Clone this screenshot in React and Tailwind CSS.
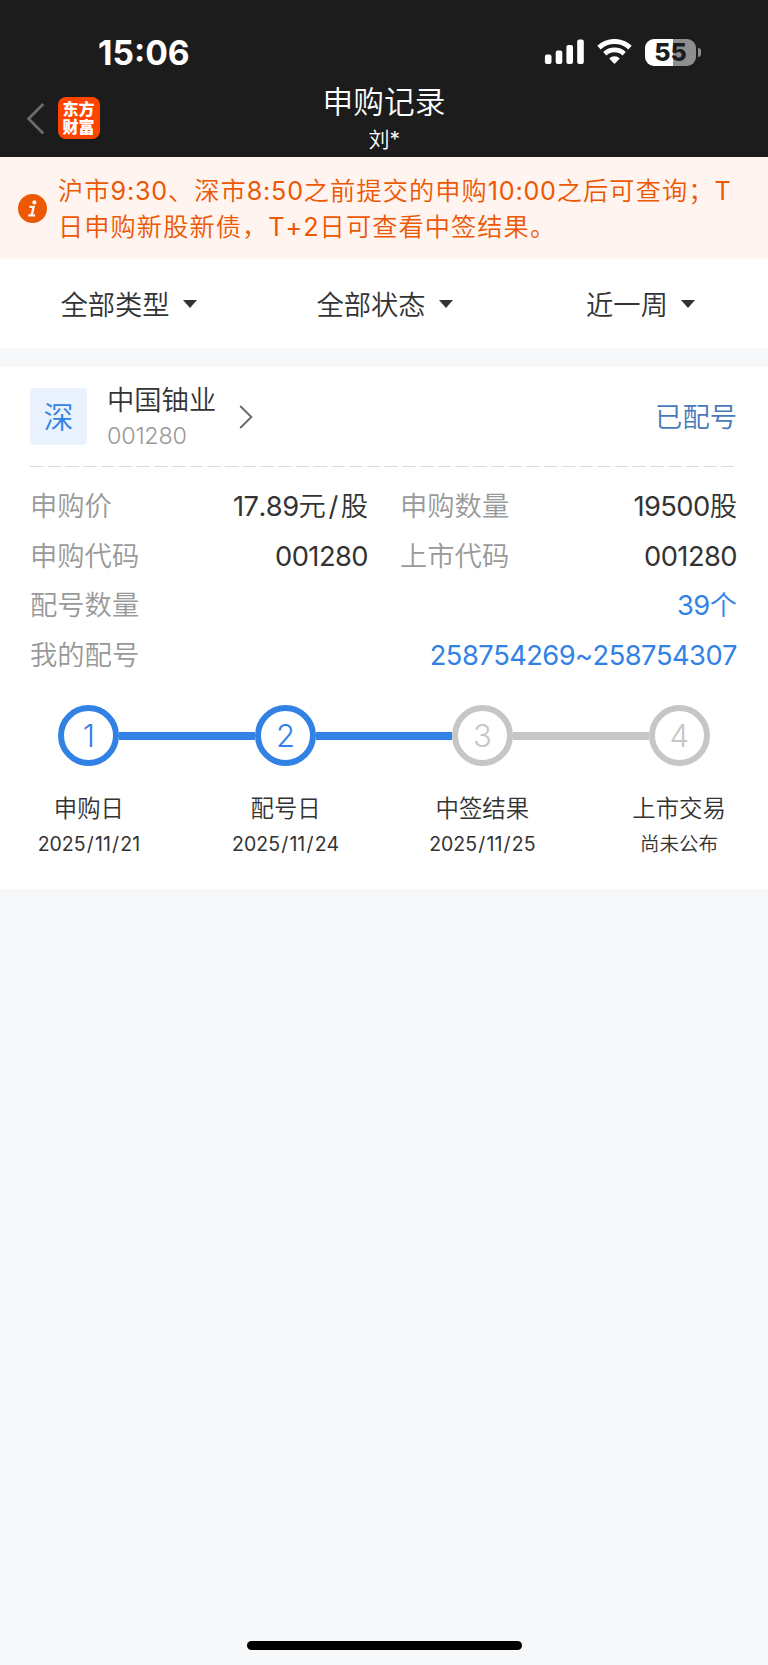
import React from "react";

const CJK = "font-['Noto_Sans_CJK_SC',sans-serif]";

// Renders mixed text, giving Latin runs and digits their own face and tracking.
function Mixed({ children, latin = "tracking-[-0.55px]", slash = "" }) {
  return String(children)
    .split(/(\/|[\x20-\x2e\x30-\x7e]+)/)
    .filter(Boolean)
    .map((part, i) =>
      /^[\x20-\x7e]+$/.test(part) ? (
        <span
          key={i}
          className={`font-['Inter',sans-serif] leading-none font-normal [font-kerning:none] ${latin} ${part === "/" ? slash : ""}`}
        >
          {part}
        </span>
      ) : (
        <span key={i}>{part}</span>
      )
    );
}

function StatusBar() {
  return (
    <div className="flex h-[85px] items-start justify-between pt-[32px] pr-[67px] pl-[98px]">
      <div className="mt-[1px] font-['Inter',sans-serif] text-[33.6px] leading-[40px] font-bold text-white">15:06</div>
      <div className="flex h-[40px] items-center gap-[13px]">
        <svg width="40" height="26" viewBox="0 0 40 26" fill="#fff">
          <rect x="0.9" y="15.5" width="6.6" height="9.5" rx="2" />
          <rect x="11.7" y="11.5" width="6.6" height="13.5" rx="2" />
          <rect x="22.4" y="6" width="6.6" height="19" rx="2" />
          <rect x="33.2" y="0.5" width="6.6" height="24.5" rx="2" />
        </svg>
        <svg width="35" height="26" viewBox="0 0 35 26" fill="none" stroke="#fff">
          <path d="M2 8.6a22.6 22.6 0 0 1 31 0" strokeWidth="5" />
          <path d="M7.8 14.7a14.2 14.2 0 0 1 19.4 0" strokeWidth="4.8" />
          <path d="M12.2 19.4a7.6 7.6 0 0 1 10.6 0L17.5 25z" fill="#fff" stroke="none" />
        </svg>
        <div className="flex items-center gap-[1.5px]">
          <div className="flex h-[27px] w-[51px] items-center justify-center rounded-[9px] bg-[linear-gradient(to_right,#fff_55%,#8e8e8e_55%)] font-['Inter',sans-serif] text-[25px] leading-[27px] font-extrabold tracking-[-0.1px] text-[#1c1c1c]">
            55
          </div>
          <div className="h-[9px] w-[3.5px] rounded-r-full bg-[#8e8e8e]" />
        </div>
      </div>
    </div>
  );
}

function NavBar() {
  return (
    <div className="grid h-[72px] grid-cols-[256px_256px_256px]">
      <div className="flex items-start pt-[12px] pl-[26px]">
        <svg width="19" height="42" viewBox="0 0 19 42" fill="none" stroke="#6b6b6b" strokeWidth="2.8">
          <path d="M17.3 7L2.6 21.8L17.3 36.4" />
        </svg>
        <div className="ml-[13px] flex h-[42px] w-[42px] items-start justify-center rounded-[8px] bg-[#ff4400] pt-[2px] text-white">
          <p className="w-[33px] text-[16px] leading-[18px] font-black break-all">东方财富</p>
        </div>
      </div>
      <div className="flex flex-col items-center text-white">
        <div className="mt-[-2px] text-[30.7px] leading-[34px] font-[350]">申购记录</div>
        <div className="mt-[8px] text-[21px] leading-[26px] font-[350]">
          <Mixed>刘*</Mixed>
        </div>
      </div>
    </div>
  );
}

function Notice() {
  return (
    <div className="flex h-[102px] items-start bg-[#fff4ef] pt-[15px] pl-[18px]">
      <svg className="mt-[22px]" width="29" height="29" viewBox="0 0 29 29">
        <circle cx="14.5" cy="14.5" r="14.5" fill="#ec5803" />
        <g fill="none" stroke="#fff4ef" strokeWidth="2.4">
          <path d="M11.4 12.9h4.2l-1.9 8.3M10.3 21.4h6.8" />
        </g>
        <circle cx="16.4" cy="8.4" r="2.1" fill="#fff4ef" />
      </svg>
      <div className="ml-[11px] text-[25.2px] leading-[35.7px] font-[350] tracking-[1.1px] whitespace-nowrap text-[#ec5803]">
        <div><Mixed latin="tracking-[0.75px]">沪市9:30、深市8:50之前提交的申购10:00之后可查询；T</Mixed></div>
        <div><Mixed latin="tracking-[1px]">日申购新股新债，T+2日可查看中签结果。</Mixed></div>
      </div>
    </div>
  );
}

function Filters() {
  return (
    <div className="grid h-[89px] grid-cols-3 bg-white text-[27.3px] leading-[88px] font-[350] text-[#333]">
      {["全部类型", "全部状态", "近一周"].map((t) => (
        <div key={t} className="flex items-start justify-center gap-[13px] pl-[1px]">
          <span>{t}</span>
          <svg className="mt-[41px]" width="14" height="8" viewBox="0 0 14 8" fill="#333">
            <path d="M0 0h14L7 8z" />
          </svg>
        </div>
      ))}
    </div>
  );
}

function Field({ label, value, blue }) {
  return (
    <div className="flex items-center justify-between">
      <span className="text-[#999]">{label}</span>
      <span className={blue ? "text-[#3282e6]" : "text-[#333]"}>
        <Mixed slash="px-[2.8px]">{value}</Mixed>
      </span>
    </div>
  );
}

const steps = [
  { n: 1, name: "申购日", date: "2025/11/21", done: true },
  { n: 2, name: "配号日", date: "2025/11/24", done: true },
  { n: 3, name: "中签结果", date: "2025/11/25", done: false },
  { n: 4, name: "上市交易", date: "尚未公布", done: false },
];

function Steps() {
  return (
    <div className="mt-[26px] -mr-[40.5px] -ml-[39.5px] grid grid-cols-4">
      {steps.map((s, i) => (
        <div key={s.n} className="flex flex-col items-center">
          <div className="flex w-full items-center">
            <div className={`mt-[2px] h-[8px] flex-1 ${i === 0 ? "bg-transparent" : i < 3 ? "bg-[#3282e6]" : "bg-[#c6c6c6]"}`} />
            <div
              className={`flex h-[61px] w-[61px] items-center justify-center rounded-full border-[6px] font-['Inter',sans-serif] text-[31px] leading-none font-light ${
                s.done ? "border-[#3282e6] text-[#3282e6]" : "border-[#c6c6c6] text-[#c6c6c6]"
              }`}
            >
              {s.n}
            </div>
            <div className={`mt-[2px] h-[8px] flex-1 ${i === 3 ? "bg-transparent" : i < 2 ? "bg-[#3282e6]" : "bg-[#c6c6c6]"}`} />
          </div>
          <div className="mt-[23px] text-[23.4px] leading-[36px] text-[#333]">{s.name}</div>
          <div className="text-[19.5px] leading-[35px] text-[#333]">
            <Mixed latin="tracking-[0px]" slash="px-[1.2px]">{s.date}</Mixed>
          </div>
        </div>
      ))}
    </div>
  );
}

function RecordCard() {
  return (
    <div className="mt-[19px] h-[522px] bg-white pt-[21px] pr-[31px] pl-[30px] font-[350]">
      <div className="flex h-[57px] items-center">
        <div className="flex h-[57px] w-[57px] items-center justify-center rounded-[4px] bg-[#e9f2fd] text-[30px] leading-[57px] text-[#3282e6]">
          <span className="-mt-[3px]">深</span>
        </div>
        <div className="ml-[20px]">
          <div className="mt-[1px] text-[27.3px] leading-[36px] text-[#333]">中国铀业</div>
          <div className="mt-[1px] font-['Inter',sans-serif] text-[23.4px] leading-[37px] font-light tracking-[-0.25px] text-[#999]">001280</div>
        </div>
        <svg className="ml-[23px]" width="14" height="24" viewBox="0 0 14 24" fill="none" stroke="#666" strokeWidth="1.8">
          <path d="M1.2 1L12.4 12L1.2 23" />
        </svg>
        <div className="-mt-[2px] ml-auto text-[27.3px] text-[#4a78b9]">已配号</div>
      </div>
      <svg className="mt-[21px] block" width="707" height="1" viewBox="0 0 707 1">
        <path d="M0 .5H704" stroke="#dcdcdc" strokeDasharray="13.7 4.02" />
      </svg>
      <div className="mt-[13px] text-[27.3px] leading-[49.7px]">
        <div className="grid grid-cols-[338px_337px] gap-x-[32px]">
          <Field label="申购价" value="17.89元/股" />
          <Field label="申购数量" value="19500股" />
          <Field label="申购代码" value="001280" />
          <Field label="上市代码" value="001280" />
        </div>
        <Field label="配号数量" value="39个" blue />
        <Field label="我的配号" value="258754269~258754307" blue />
      </div>
      <Steps />
    </div>
  );
}

export default function App() {
  return (
    <div className={`flex h-[1665px] w-[768px] flex-col overflow-hidden bg-[#f7f8fa] ${CJK}`}>
      <header className="h-[157px] bg-[#1c1c1c]">
        <StatusBar />
        <NavBar />
      </header>
      <Notice />
      <Filters />
      <RecordCard />
      <div className="mx-auto mt-auto mb-[15px] h-[9px] w-[275px] rounded-full bg-black" />
    </div>
  );
}
